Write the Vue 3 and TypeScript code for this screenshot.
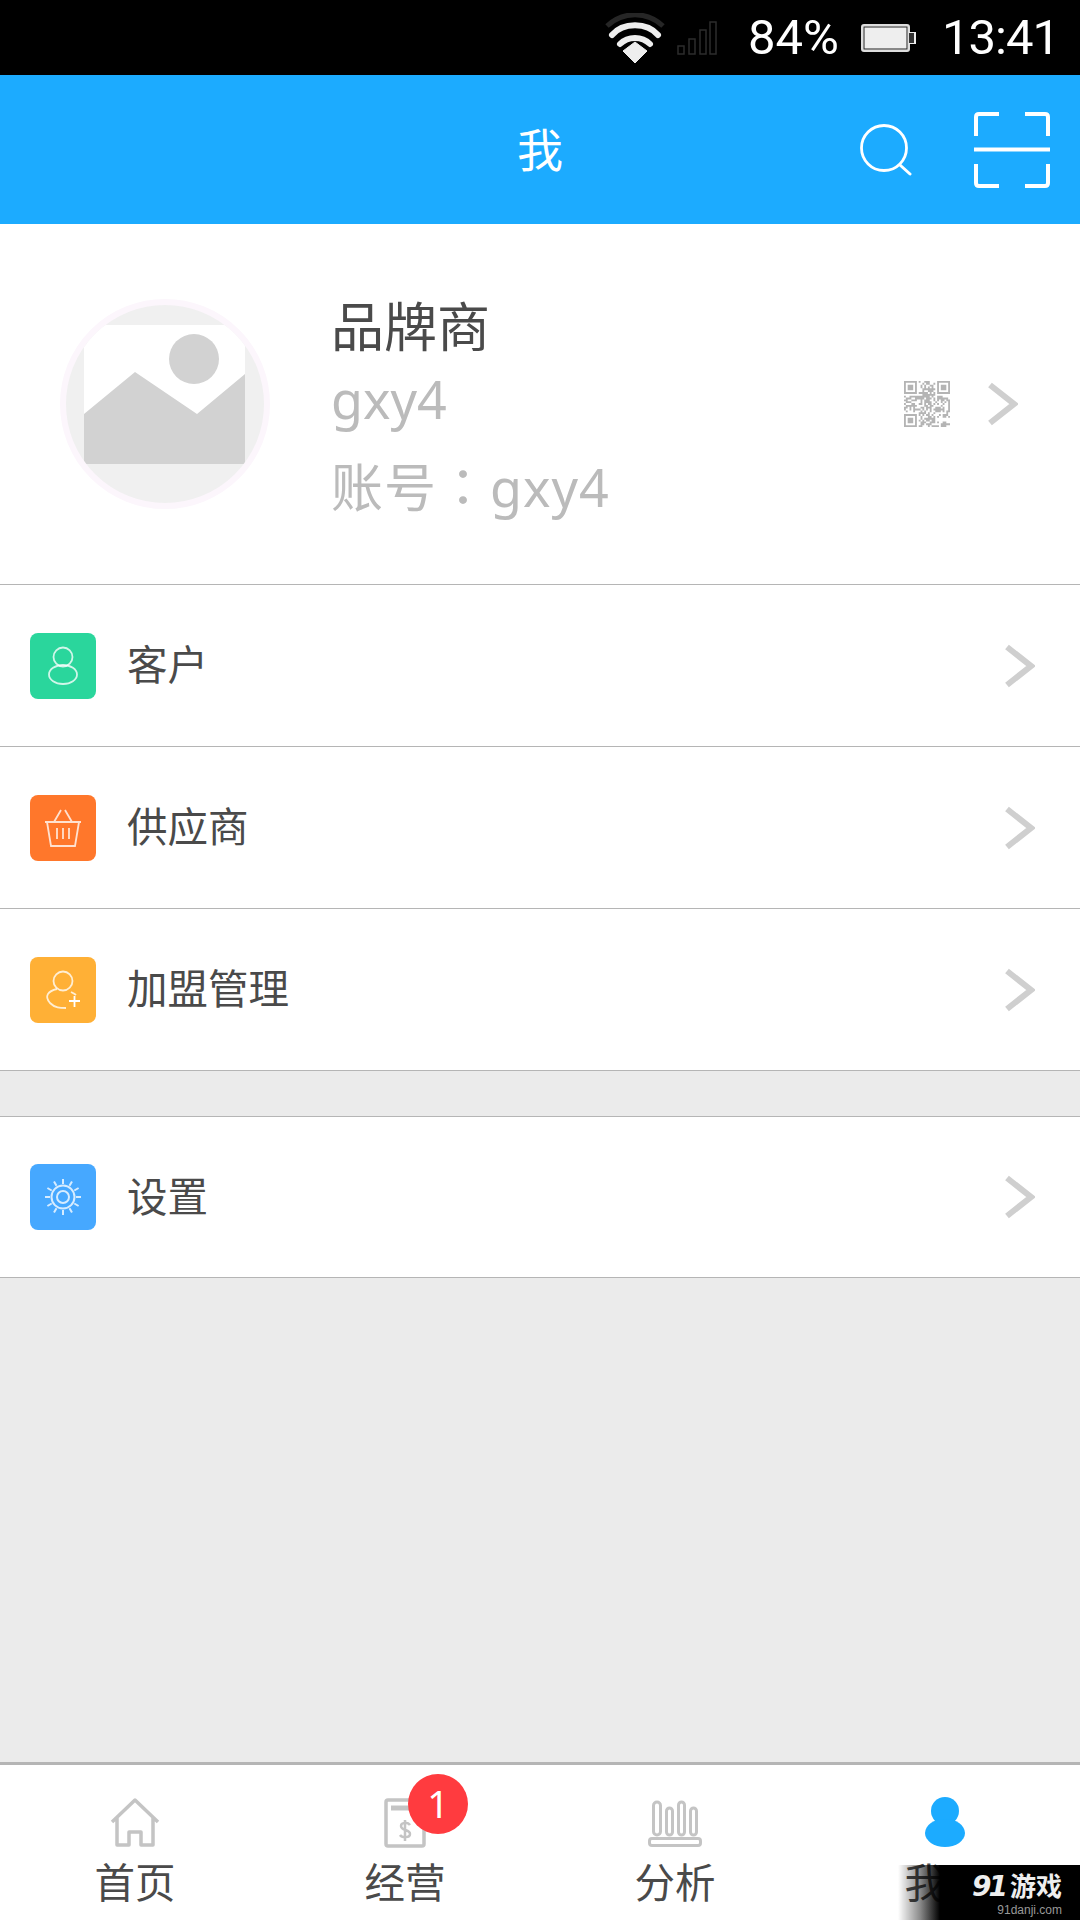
<script setup lang="ts">
const rows = [
  [{ label: '客户', icon: 'user', color: '#2ad69c' }, { label: '供应商', icon: 'basket', color: '#ff772b' }, { label: '加盟管理', icon: 'join', color: '#ffb036' }],
  [{ label: '设置', icon: 'gear', color: '#46a8ff' }],
]

const tabs = [
  { label: '首页', icon: 'home' },
  { label: '经营', icon: 'bill', badge: 1 },
  { label: '分析', icon: 'chart' },
  { label: '我', icon: 'me' },
]

// gear teeth
const teeth = Array.from({ length: 12 }, (_, i) => {
  const a = (i * Math.PI) / 6
  const p = (r: number) => `${(33 + r * Math.cos(a)).toFixed(1)} ${(33 + r * Math.sin(a)).toFixed(1)}`
  return `M${p(13)}L${p(18)}`
}).join('')

// fake qr code, only the texture matters at this size
const qrPath = (() => {
  const n = 25
  let seed = 7
  let d = ''
  for (let y = 0; y < n; y++) {
    for (let x = 0; x < n; x++) {
      const corner = (x < 8 && y < 8) || (x > 16 && y < 8) || (x < 8 && y > 16)
      seed = (seed * 1103515245 + 12345) & 0x7fffffff
      if (!corner && (seed >> 16) % 100 < 52) d += `M${x} ${y}h1v1h-1z`
    }
  }
  for (const [x, y] of [[0, 0], [18, 0], [0, 18]]) {
    d += `M${x} ${y}h7v7h-7zM${x + 1} ${y + 1}v5h5v-5zM${x + 2} ${y + 2}h3v3h-3z`
  }
  return d
})()
</script>

<template>
  <div class="page">
    <div class="status">
      <svg width="60" height="50" viewBox="0 0 60 50" fill="none">
        <path d="M2 13C18 -2 42 -2 58 13" stroke="#262626" stroke-width="5" />
        <path d="M7 22C18 9 42 9 53 22" stroke="#eee" stroke-width="6" stroke-linecap="round" />
        <path d="M15 31C23 23 37 23 45 31" stroke="#eee" stroke-width="6" stroke-linecap="round" />
        <path d="M30 29L42 38L30 50L18 38Z" fill="#eee" stroke="#eee" stroke-linejoin="round" />
      </svg>
      <svg class="signal" width="40" height="34" viewBox="0 0 40 34" fill="none" stroke="#2c2c2c" stroke-width="1.500">
        <rect x="1" y="25" width="6" height="8" />
        <rect x="12" y="18" width="6" height="15" />
        <rect x="23" y="9" width="6" height="24" />
        <rect x="33" y="1" width="6" height="32" />
      </svg>
      <span class="pct">84%</span>
      <svg class="batt" width="55" height="28" viewBox="0 0 55 28">
        <rect x="1" y="1" width="47" height="26" rx="2" fill="#eee" stroke="#ddd" stroke-width="2" />
        <rect x="3" y="3" width="43" height="22" fill="#eee" stroke="#222" stroke-width="1" />
        <path d="M48 8h7v12h-7z" fill="#eee" />
        <path d="M48 9h5v10h-5z" fill="#333" />
      </svg>
      <span class="time">13:41</span>
    </div>

    <header class="bar">
      <span></span>
      <h1 class="title">我</h1>
      <div class="actions">
        <svg width="52" height="54" viewBox="0 0 52 54" fill="none" stroke="#fff" stroke-linecap="round">
          <circle cx="24" cy="25" r="22.500" stroke-width="2.800" />
          <path d="M40 42L50 51" stroke-width="3" />
        </svg>
        <svg width="76" height="76" viewBox="0 0 76 76" fill="none" stroke="#fff" stroke-width="4">
          <path d="M2 24V5Q2 2 5 2H25M51 2H71Q74 2 74 5V24M2 52V71Q2 74 5 74H25M51 74H71Q74 74 74 71V52" />
          <path d="M0 37.500H76" />
        </svg>
      </div>
    </header>

    <section class="profile">
      <svg class="avatar" width="210" height="210" viewBox="0 0 210 210">
        <defs>
          <clipPath id="avatar-clip"><circle cx="105" cy="105" r="99" /></clipPath>
        </defs>
        <circle cx="105" cy="105" r="102" fill="#f0f0f0" stroke="#fcf6fc" stroke-width="6" />
        <g clip-path="url(#avatar-clip)">
          <path d="M24 26H185V165H24Z" fill="#fff" />
          <path d="M24 115L75 73L137 115L185 75V165H24Z" fill="#d2d2d2" />
          <circle cx="134" cy="60" r="25" fill="#d2d2d2" />
        </g>
      </svg>
      <div class="who">
        <div class="name">品牌商</div>
        <div class="sub">gxy4</div>
        <div class="account">账号：gxy4</div>
      </div>
      <svg class="qr" width="46" height="46" viewBox="0 0 25 25">
        <path :d="qrPath" fill="#b4b4b4" fill-rule="evenodd" />
      </svg>
      <svg width="30" height="44" viewBox="0 0 30 44" fill="none" stroke="#cfcfcf" stroke-width="6">
        <path d="M2 3L26 22L2 41" />
      </svg>
    </section>

    <template v-for="(group, g) in rows" :key="g">
      <div class="group">
        <div v-for="row in group" :key="row.label" class="row">
          <span class="badge-icon" :style="{ background: row.color }">
            <svg width="66" height="66" viewBox="0 0 66 66" fill="none" stroke="#fff" stroke-opacity=".78" stroke-width="1.800">
              <template v-if="row.icon === 'user'">
                <circle cx="33" cy="24" r="9.500" />
                <ellipse cx="33" cy="41.500" rx="14" ry="9.500" />
              </template>
              <template v-else-if="row.icon === 'basket'">
                <path d="M15 27H51M17 27L21 51H45L49 27M24 27L31 15M42 27L35 15M27 33V44M33 33V44M39 33V44" />
              </template>
              <template v-else-if="row.icon === 'join'">
                <circle cx="33" cy="24" r="9.500" />
                <path d="M27 32C18 34 14 39 20 46C25 51 30 51 36 51M41 35C43 36 45 37 46 38" />
                <path d="M39 44H50M44.500 39V50" stroke-opacity="1" />
              </template>
              <template v-else>
                <circle cx="33" cy="33" r="11.500" stroke-width="2" />
                <circle cx="33" cy="33" r="6" stroke-width="2" />
                <path :d="teeth" stroke-width="2" />
              </template>
            </svg>
          </span>
          <span class="label">{{ row.label }}</span>
          <svg width="30" height="44" viewBox="0 0 30 44" fill="none" stroke="#cfcfcf" stroke-width="6">
            <path d="M2 3L26 22L2 41" />
          </svg>
        </div>
      </div>
      <div class="gap" :class="{ fill: g === rows.length - 1 }"></div>
    </template>

    <nav class="tabs">
      <div v-for="tab in tabs" :key="tab.label" class="tab">
        <span class="tab-icon">
          <svg width="60" height="52" viewBox="0 0 60 52" fill="none" stroke="#c4c4c4" stroke-width="3.500" stroke-linejoin="round">
            <path v-if="tab.icon === 'home'" d="M7 25L30 3L53 25M12 21V48H24V35H36V48H48V21" />
            <template v-else-if="tab.icon === 'bill'">
              <rect x="11" y="3" width="38" height="46" rx="2" />
              <path d="M16 11H44" stroke-width="5" />
              <path d="M35 28C33 25 26 25 26 29C26 34 35 32 35 37C35 41 27 41 25 38M30 23V44" stroke-width="2.500" />
            </template>
            <template v-else-if="tab.icon === 'chart'">
              <rect x="8.500" y="5" width="7" height="33" rx="3.500" stroke-width="3" />
              <rect x="21.500" y="11" width="6" height="27" rx="3" stroke-width="3" />
              <rect x="33.500" y="5" width="6" height="33" rx="3" stroke-width="3" />
              <rect x="45.500" y="11" width="6" height="27" rx="3" stroke-width="3" />
              <rect x="4.500" y="41.500" width="51" height="7" rx="2.500" stroke-width="3" />
            </template>
            <template v-else>
              <circle cx="30" cy="14" r="14" fill="#1cabff" stroke="none" />
              <ellipse cx="30" cy="36" rx="20" ry="14" fill="#1cabff" stroke="none" />
            </template>
          </svg>
          <span v-if="tab.badge" class="count">{{ tab.badge }}</span>
        </span>
        <span class="tab-label">{{ tab.label }}</span>
      </div>
    </nav>

    <div class="mark">
      <div class="mark-logo"><span class="mark-num">91</span>游戏</div>
      <div class="mark-url">91danji.com</div>
    </div>
  </div>
</template>

<style scoped>
.page {
  position: relative;
  display: flex;
  flex-direction: column;
  width: 1080px;
  height: 1920px;
  overflow: hidden;
  background: #ebebeb;
  color: #4a4a4a;
  font-family: "Noto Sans", "Noto Sans CJK SC", sans-serif;
}
.status {
  display: flex;
  align-items: center;
  height: 75px;
  padding-left: 605px;
  box-sizing: border-box;
  background: #000;
  color: #fff;
  font-family: Roboto, sans-serif;
  font-size: 49px;
}
.status > * {
  flex: none;
}
.signal {
  margin: 0 31px 0 12px;
}
.batt {
  margin: 0 26px 0 22px;
}
.time {
  letter-spacing: -1px;
}
.bar {
  display: grid;
  grid-template-columns: 1fr auto 1fr;
  align-items: center;
  height: 149px;
  background: #1cabff;
  color: #fff;
}
.title {
  margin: 0 0 6px;
  font-size: 46px;
  font-weight: 400;
}
.actions {
  display: flex;
  align-items: center;
  justify-content: flex-end;
  gap: 62px;
  padding-right: 30px;
}
.profile {
  display: flex;
  align-items: center;
  height: 361px;
  box-sizing: border-box;
  padding: 0 62px 0 60px;
  background: #fff;
  border-bottom: 1px solid #b5b5b5;
}
.avatar {
  flex: none;
  margin-right: 61px;
}
.who {
  flex: 1;
  padding-top: 22px;
  font-size: 52px;
  color: #bbb;
}
.name {
  line-height: 70px;
  color: #4a4a4a;
  font-size: 53px;
}
.sub {
  line-height: 74px;
}
.account {
  font-family: "Noto Sans", "Noto Sans CJK TC", sans-serif;
  letter-spacing: 1px;
  line-height: 102px;
}
.qr {
  margin-right: 38px;
  filter: blur(0.7px);
}
.group {
  background: #fff;
}
.row {
  display: flex;
  align-items: center;
  height: 162px;
  box-sizing: border-box;
  padding: 0 45px 0 30px;
  border-bottom: 1px solid #b5b5b5;
}
.gap + .group .row {
  height: 161px;
}
.badge-icon {
  display: block;
  width: 66px;
  height: 66px;
  border-radius: 8px;
}
.label {
  flex: 1;
  margin-left: 31px;
  padding-bottom: 6px;
  font-size: 40.5px;
}
.gap {
  height: 45px;
  border-bottom: 1px solid #b5b5b5;
}
.gap.fill {
  flex: 1;
  border-bottom: 0;
}
.tabs {
  display: grid;
  grid-template-columns: repeat(4, 270px);
  height: 158px;
  box-sizing: border-box;
  background: #fff;
  border-top: 3px solid #b5b5b5;
}
.tab {
  display: flex;
  flex-direction: column;
  align-items: center;
  padding-top: 32px;
}
.tab-icon {
  position: relative;
  display: block;
  height: 52px;
}
.count {
  position: absolute;
  top: -23px;
  left: 33px;
  width: 60px;
  height: 60px;
  border-radius: 50%;
  background: #ff3b3f;
  color: #fff;
  font-size: 38px;
  line-height: 58px;
  text-align: center;
}
.tab-label {
  width: 81px;
  margin-top: 8px;
  font-size: 40.5px;
  line-height: 52px;
}
.mark {
  position: absolute;
  right: 0;
  bottom: 0;
  width: 182px;
  height: 55px;
  box-sizing: border-box;
  padding: 6px 18px 0 0;
  background: linear-gradient(90deg, rgba(0, 0, 0, 0), rgba(0, 0, 0, 0.45) 12%, #000 23%);
  color: #eee;
  text-align: right;
}
.mark-logo {
  font-size: 26px;
  font-weight: 700;
  line-height: 30px;
}
.mark-num {
  margin-right: 5px;
  font-family: "DejaVu Sans", sans-serif;
  font-size: 28px;
  font-style: italic;
  font-weight: 700;
  letter-spacing: -3px;
}
.mark-url {
  margin-top: 1px;
  color: #999;
  font-family: "Liberation Sans", sans-serif;
  font-size: 12px;
  line-height: 14px;
}
</style>

<style>
body {
  background: #ebebeb;
}
</style>
